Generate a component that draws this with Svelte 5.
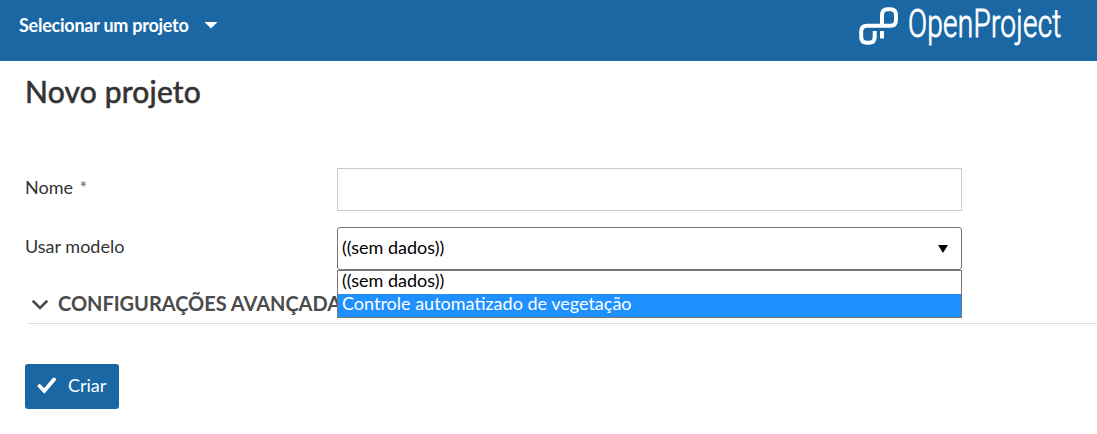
<script>
  const options = ['((sem dados))', 'Controle automatizado de vegetação'];
  let selected = $state(0);
  let highlighted = $state(1);
</script>

<div class="page">
  <header>
    <button class="picker">
      <span>Selecionar um projeto</span>
      <svg width="14" height="8" viewBox="0 0 14 8"><path d="M.5 1h13L7 7.500z" fill="#fff" /></svg>
    </button>
    <svg width="210" height="50" viewBox="0 0 210 50">
      <g fill="none" stroke="#fff" stroke-width="4">
        <path d="M27 25.500V15.500Q27 9.300 32.500 9.300H35.500Q41 9.300 41 15.500V20Q41 25.800 35.500 25.800H12Q6.200 25.800 6.200 31.500V37Q6.200 42.800 12 42.800H14Q19.700 42.800 19.700 37V31" />
        <path d="M27 31V38.500" />
      </g>
      <text class="brand" x="0" y="0" transform="translate(53 37) scale(.72 1)" textLength="213">OpenProject</text>
    </svg>
  </header>

  <main>
    <h1>Novo projeto</h1>
    <form onsubmit={(e) => e.preventDefault()}>
      <div class="row">
        <label for="name">Nome <span class="star">*</span></label>
        <input id="name" type="text" />
      </div>
      <div class="row">
        <span class="label">Usar modelo</span>
        <div class="select">
          <div class="value">
            <span>{options[selected]}</span>
            <svg width="10" height="8" viewBox="0 0 10 8"><path d="M0 0h10L5 8z" /></svg>
          </div>
          <ul>
            {#each options as option, i}
              <li class:active={i === highlighted}>{option}</li>
            {/each}
          </ul>
        </div>
      </div>
      <div class="advanced">
        <svg width="16" height="10" viewBox="0 0 16 10"><path d="M1.500 1.500L8 8l6.500-6.500" fill="none" stroke="#4b4b4b" stroke-width="2.600" stroke-linecap="round" /></svg>
        <span>CONFIGURAÇÕES AVANÇADAS</span>
      </div>
      <button class="create">
        <svg width="20" height="18" viewBox="0 0 20 18"><path d="M2.500 9L7.300 14L17 2.500" fill="none" stroke="#fff" stroke-width="3.800" stroke-linecap="round" stroke-linejoin="miter" /></svg>
        <span>Criar</span>
      </button>
    </form>
  </main>
</div>

<style>
  .page {
    width: 1097px;
    height: 434px;
    overflow: hidden;
    background: #fff;
    color: #333;
    font: 18px/24px Lato, sans-serif;
  }
  header {
    display: flex;
    justify-content: space-between;
    align-items: flex-start;
    height: 61px;
    padding: 0 32px 0 19px;
    box-sizing: border-box;
    background: #1a67a3;
  }
  button {
    border: 0;
    font: inherit;
    color: #fff;
    background: none;
    padding: 0;
    white-space: nowrap;
  }
  .picker {
    display: flex;
    align-items: center;
    gap: 15px;
    margin-top: 13px;
    font-weight: 700;
    font-size: 18px;
    letter-spacing: -0.25px;
  }
  .brand {
    fill: #fff;
    stroke: #fff;
    stroke-width: 0.9px;
    font: 300 39px Roboto, sans-serif;
  }
  main {
    padding: 0 0 0 25px;
  }
  h1 {
    margin: 0;
    padding-top: 10px;
    height: 97px;
    font-size: 30px;
    line-height: 40px;
    font-weight: 400;
    letter-spacing: 0.2px;
    -webkit-text-stroke: 0.6px #333;
  }
  .row {
    display: flex;
    height: 59px;
  }
  label,
  .label {
    width: 312px;
    padding-top: 7px;
  }
  .star {
    margin-left: 2px;
    color: #5a6570;
  }
  input {
    width: 625px;
    height: 43px;
    box-sizing: border-box;
    border: 1px solid #cacaca;
    outline: 0;
  }
  .select {
    position: relative;
    width: 625px;
    height: 43px;
    color: #000;
  }
  .value {
    display: flex;
    justify-content: space-between;
    align-items: center;
    height: 43px;
    padding: 0 13px 0 4px;
    box-sizing: border-box;
    border: 1px solid #767676;
    border-radius: 3px;
  }
  .value span {
    padding-bottom: 4px;
  }
  ul {
    position: absolute;
    z-index: 1;
    top: 43px;
    left: 0;
    width: 625px;
    box-sizing: border-box;
    margin: 0;
    padding: 0;
    border: 1px solid #767676;
    background: #fff;
    list-style: none;
  }
  li {
    height: 23px;
    line-height: 19px;
    padding-left: 4px;
  }
  .active {
    color: #fff;
    background: #1e90ff;
  }
  .advanced {
    display: flex;
    align-items: center;
    gap: 10px;
    height: 37px;
    margin-left: 3px;
    padding-left: 4px;
    border-bottom: 1px solid #ddd;
    color: #4b4b4b;
    font-size: 20px;
    font-weight: 700;
    letter-spacing: -0.03px;
  }
  .advanced span {
    padding-bottom: 3px;
  }
  .create {
    display: flex;
    align-items: center;
    gap: 11px;
    width: 94px;
    height: 45px;
    margin-top: 40px;
    padding-left: 12px;
    border-radius: 3px;
    background: #1a67a3;
  }
  .create span {
    padding-bottom: 3px;
  }
  .create svg {
    margin-top: -2px;
  }
</style>
